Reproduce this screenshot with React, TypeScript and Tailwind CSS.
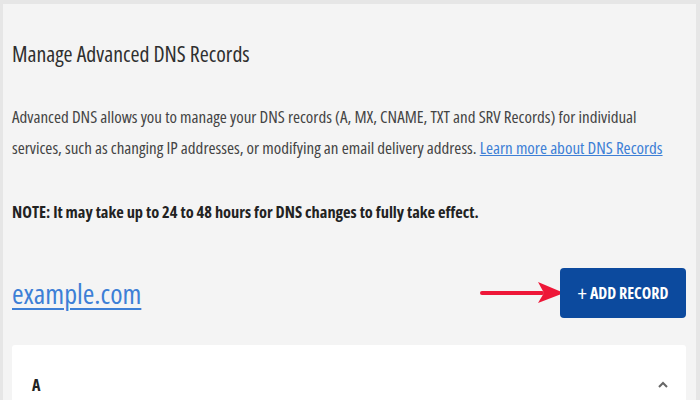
export default function App() {
  return (
    <div className="w-[700px] h-[400px] overflow-hidden bg-[#e6e6e6] pt-[4px] pr-[4px] pl-[3px]">
      <div
        className="h-full bg-[#f4f4f4] pl-[9px] pr-[10px] pt-[38px] text-[#333333] [font-stretch:80%]"
        style={{ fontFamily: '"Open Sans", "Noto Sans", sans-serif' }}
      >
        <h1 className="text-[21.8px] leading-[24px] font-normal text-[#2f2f2f]">Manage Advanced DNS Records</h1>
        <p className="mt-[35px] text-[17px] leading-[31px] text-[#444444]">
          Advanced DNS allows you to manage your DNS records (A, MX, CNAME, TXT and SRV Records) for individual
          <br />
          services, such as changing IP addresses, or modifying an email delivery address.{" "}
          <a className="text-[#3d7fd6] underline">Learn more about DNS Records</a>
        </p>
        <p className="mt-[33px] text-[16.4px] leading-[31px] font-bold text-[#222222]">
          NOTE: It may take up to 24 to 48 hours for DNS changes to fully take effect.
        </p>
        <div className="mt-[41px] flex items-center justify-between">
          <a className="text-[28px] leading-[36px] text-[#3d7fd6] underline decoration-[2px] underline-offset-[4px]">example.com</a>
          <div className="flex items-center">
            <svg width="90" height="24" viewBox="0 0 90 24" className="mr-[-6px]">
              <line x1="6" y1="12" x2="66" y2="12" stroke="#ee1738" strokeWidth="4" strokeLinecap="round" />
              <polygon points="62,1 88,12 62,22 68,12" fill="#ee1738" />
            </svg>
            <button className="w-[126px] h-[50px] rounded-[4px] bg-[#0c4a9e] text-white text-[16px] font-bold flex items-center justify-center gap-[3px]">
              <span className="text-[22px] font-normal leading-none">+</span>
              <span>ADD RECORD</span>
            </button>
          </div>
        </div>
        <div className="mt-[27px] h-[60px] bg-white rounded-t-[3px] flex items-start justify-between pl-[20px] pr-[18px] pt-[30px]">
          <span className="text-[16px] leading-[20px] font-bold text-[#222222]">A</span>
          <svg width="10" height="8" viewBox="0 0 10 8" className="mt-[6px]">
            <polyline points="1,6 5,2 9,6" fill="none" stroke="#666" strokeWidth="2" />
          </svg>
        </div>
      </div>
    </div>
  );
}
